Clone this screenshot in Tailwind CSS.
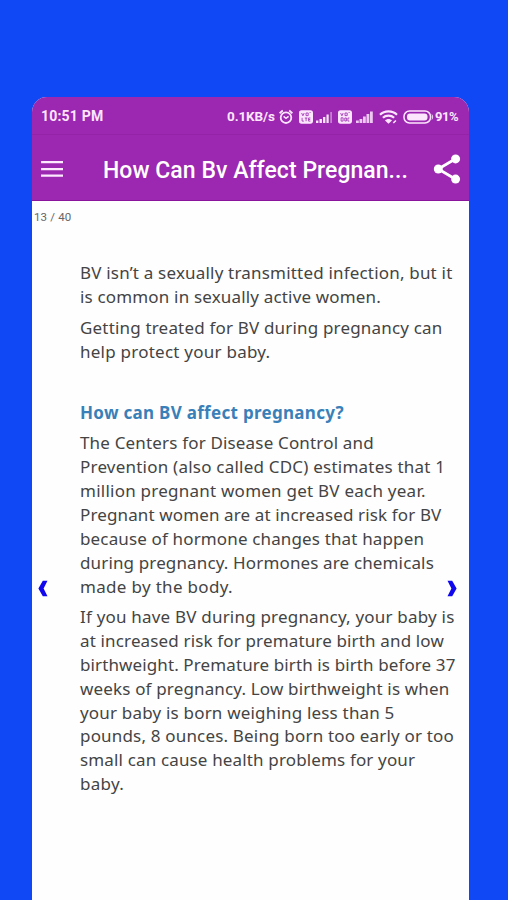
<!DOCTYPE html>
<html lang="en">
<head>
<meta charset="utf-8">
<title>How Can Bv Affect Pregnancy</title>
<script src="https://cdn.jsdelivr.net/npm/@tailwindcss/browser@4"></script>
</head>
<body class="bg-[#1148f6] w-[508px] h-[900px] overflow-hidden">
<div class="pt-[97px] pl-[32px]">
<div class="relative w-[437px] h-[803px] bg-[#fefefe] flex flex-col rounded-t-[15px] overflow-hidden font-['Roboto',sans-serif]">
<header class="bg-[#9c27b0] h-[104px] shrink-0 flex flex-col text-white border-b border-[#8a159c]">
  <div class="h-[38px] shrink-0 border-b border-[#9423a8] flex items-center pt-[2px] pl-[9px] text-[#fbe6fd] font-bold whitespace-nowrap">
    <span class="w-[186px] text-[14px] tracking-[0.2px]">10:51 PM</span>
    <span class="w-[52px] text-[13.5px] tracking-[-0.1px]">0.1KB/s</span>
    <!-- alarm -->
    <svg class="w-[14px] h-[16px] mr-[6px]" viewBox="0 0 14 16" fill="none" stroke="currentColor"><circle cx="7" cy="8.7" r="5.3" stroke-width="1.8"/><path d="M.6 4.2 3.8 1.5M13.4 4.2l-3.200-2.700" stroke-width="1.8"/><path d="M4.6 7.4 7 9.4l2.6-2" stroke-width="1.5"/></svg>
    <!-- VoLTE badge and signal, SIM 1 -->
    <svg class="w-[14px] h-[14px] mr-[3px]" viewBox="0 0 14 14"><rect width="14" height="13.4" y=".3" rx="2.6" fill="currentColor"/><path d="m2.6 3 1.3 2.8L5.2 3M7 3h2.2v2.6H7zM10.6 2.5h1M3.1 7.8v3.3h1.8M5.8 8h2.6M7.1 8v3.2M11.4 8H9.6v3.1h1.8M9.6 9.5h1.6" fill="none" stroke="#9c27b0" stroke-width=".8"/></svg>
    <svg class="w-[17px] h-[12px] mr-[5px]" viewBox="0 0 17 12" fill="currentColor"><path d="M0 9.5h2.4V12H0zM3.5 8h2.4v4H3.5zM7 6h2.4v6H7zM10.5 3.5h2.2V12h-2.2z"/><path d="M14.2 1h1.8v11h-1.8z" opacity=".45"/></svg>
    <!-- VoLTE badge and signal, SIM 2 -->
    <svg class="w-[14px] h-[14px] mr-[4px]" viewBox="0 0 14 14"><rect width="14" height="13.4" y=".3" rx="2.6" fill="currentColor"/><path d="m2.6 3 1.3 2.8L5.2 3M7 3h2.2v2.6H7zM10.6 2.5h1M3.1 7.8h2v3.3h-2zM6.8 8h1.6v3H6.8zM11.4 8H9.9v3.1h1.5" fill="none" stroke="#9c27b0" stroke-width=".8"/></svg>
    <svg class="w-[17px] h-[12px] mr-[6px]" viewBox="0 0 17 12" fill="currentColor"><path d="M0 9.5h2.8V12H0zM3.5 8h2.8v4H3.5zM7 5.5h2.8V12H7zM10.5 3h2.800v9h-2.800zM14 .6h2.800V12H14z" opacity=".85"/></svg>
    <!-- wifi -->
    <svg class="w-[19px] h-[14px] mr-[5px]" viewBox="0 0 19 14" fill="none" stroke="currentColor" stroke-width="2.200"><path d="M1 4.8C5.6.2 13.4.2 18 4.8M3.9 7.8c3-2.9 8.200-2.900 11.200 0"/><path d="M6 10.400c2-2 5-2 7 0l-3.500 3.300z" fill="currentColor" stroke="none"/><path d="m14.300 13 2.600-2.500" stroke-width="1.600"/></svg>
    <!-- battery -->
    <svg class="w-[31px] h-[14px] mr-[1px]" viewBox="0 0 31 14"><rect x="1" y="1" width="26.500" height="12" rx="5.500" fill="none" stroke="currentColor" stroke-width="1.500"/><rect x="4" y="3.500" width="20.500" height="7" rx="3" fill="currentColor"/><path d="M28.800 4.500c1.200.500 1.200 4.500 0 5" fill="currentColor" stroke="currentColor" stroke-width=".6"/></svg>
    <span class="text-[13px] tracking-[-0.4px]">91%</span>
  </div>
  <div class="flex-1 flex items-center pl-[9px] pt-[3px]">
    <svg class="w-[22px] h-[16px] shrink-0 mr-[40px]" viewBox="0 0 22 16" fill="#fdeaff"><path d="M0 0h22v2.300H0zM0 6.900h22v2.300H0zM0 13.500h22v2.300H0z"/></svg>
    <h1 class="w-[330px] pt-[4px] text-[23px] leading-[30px] font-medium tracking-[0.04px] whitespace-nowrap">How Can Bv Affect Pregnan...</h1>
    <svg class="w-[28px] h-[30px] shrink-0" viewBox="0 0 28 30" fill="#fff"><path d="M22.600 4.700 5.300 15 22.600 25.300" fill="none" stroke="#fff" stroke-width="2.800"/><circle cx="5.300" cy="15" r="4.500"/><circle cx="22.600" cy="4.900" r="4.500"/><circle cx="22.600" cy="25.100" r="4.500"/></svg>
  </div>
</header>
<main class="flex-1 pt-[8px]">
  <div class="pl-[2px] h-[16px] text-[11.500px] leading-[17px] tracking-[0.15px] text-[#666]">13 / 40</div>
  <article class="pl-[48px] pt-[36px] font-['Noto_Sans',sans-serif] text-[17px] leading-[23.880px] whitespace-nowrap text-[#444]">
    <p class="mb-[7px]"><span class="tracking-[0.19px]">BV isn’t a sexually transmitted infection, but it</span><br><span class="tracking-[0.17px]">is common in sexually active women.</span></p>
    <p class="mb-[37.500px]"><span class="tracking-[0.18px]">Getting treated for BV during pregnancy can</span><br><span class="tracking-[0.24px]">help protect your baby.</span></p>
    <h2 class="mb-[6.500px] font-bold tracking-[0.3px] text-[#3a80b8]">How can BV affect pregnancy?</h2>
    <p class="mb-[6.500px]"><span class="tracking-[0.17px]">The Centers for Disease Control and</span><br><span class="tracking-[0.22px]">Prevention (also called CDC) estimates that 1</span><br><span class="tracking-[0.24px]">million pregnant women get BV each year.</span><br><span class="tracking-[0.13px]">Pregnant women are at increased risk for BV</span><br><span class="tracking-[0.145px]">because of hormone changes that happen</span><br><span class="tracking-[0.14px]">during pregnancy. Hormones are chemicals</span><br><span class="tracking-[0.32px]">made by the body.</span></p>
    <p><span class="tracking-[0.2px]">If you have BV during pregnancy, your baby is</span><br><span class="tracking-[0.15px]">at increased risk for premature birth and low</span><br><span class="tracking-[0.11px]">birthweight. Premature birth is birth before 37</span><br><span class="tracking-[0.16px]">weeks of pregnancy. Low birthweight is when</span><br><span class="tracking-[0.19px]">your baby is born weighing less than 5</span><br><span class="tracking-[0.18px]">pounds, 8 ounces. Being born too early or too</span><br><span class="tracking-[0.15px]">small can cause health problems for your</span><br><span class="tracking-[0.26px]">baby.</span></p>
  </article>
</main>
<!-- page navigation overlays -->
<button aria-label="Previous page" class="absolute left-[6px] top-[483px]"><svg class="w-[10px] h-[17px]" viewBox="0 0 10 17" fill="#1208ee"><path d="M4.800.8h4.700L5.600 8.500l3.900 7.700H4.800L.4 8.500z"/></svg></button>
<button aria-label="Next page" class="absolute left-[415px] top-[483px]"><svg class="w-[10px] h-[17px]" viewBox="0 0 10 17" fill="#1208ee"><path d="M5.200.8H.5L4.400 8.500.5 16.200h4.700l4.400-7.700z"/></svg></button>
</div>
</div>
</body>
</html>
